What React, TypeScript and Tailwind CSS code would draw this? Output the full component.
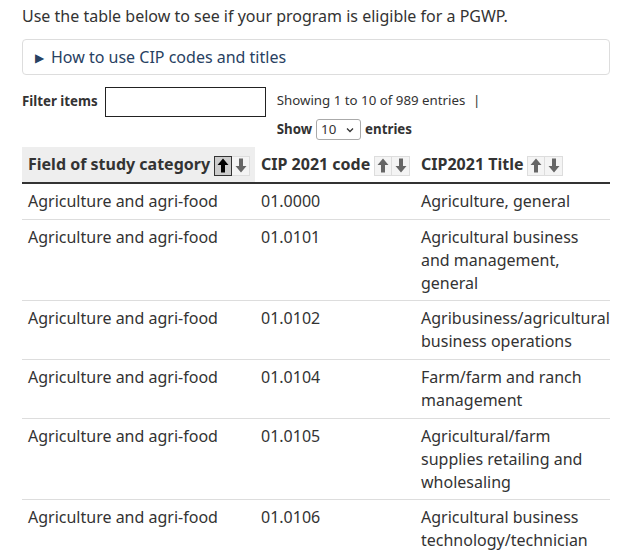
import React from "react";

const rows: [string, string, string][] = [
  ["Agriculture and agri-food", "01.0000", "Agriculture, general"],
  ["Agriculture and agri-food", "01.0101", "Agricultural business and management, general"],
  ["Agriculture and agri-food", "01.0102", "Agribusiness/agricultural business operations"],
  ["Agriculture and agri-food", "01.0104", "Farm/farm and ranch management"],
  ["Agriculture and agri-food", "01.0105", "Agricultural/farm supplies retailing and wholesaling"],
  ["Agriculture and agri-food", "01.0106", "Agricultural business technology/technician"],
];

function Arrow({ dir, color }: { dir: "up" | "down"; color: string }) {
  return (
    <svg width="12" height="15" viewBox="0 0 12 15" style={{ transform: dir === "down" ? "rotate(180deg)" : undefined }}>
      <path d="M6 0.5 L11.5 7 L8 7 L8 14.5 L4 14.5 L4 7 L0.5 7 Z" fill={color} />
    </svg>
  );
}

function SortButtons({ active }: { active?: boolean }) {
  return (
    <span className="inline-flex ml-[4px] align-middle">
      <span
        className={
          "w-[18px] h-[20px] flex items-center justify-center border " +
          (active ? "border-[#333] bg-[#ccc]" : "border-[#ddd] bg-[#f4f4f4]")
        }
      >
        <Arrow dir="up" color={active ? "#000" : "#666"} />
      </span>
      <span className="w-[18px] h-[20px] flex items-center justify-center border border-[#ddd] border-l-0 bg-[#f4f4f4]">
        <Arrow dir="down" color="#666" />
      </span>
    </span>
  );
}

export default function App() {
  return (
    <div
      className="bg-white text-[#333] pl-[22px] pr-[30px] pt-[5px] w-[640px] h-[558px] overflow-hidden"
      style={{ fontFamily: '"Noto Sans", sans-serif' }}
    >
      <p className="text-[16px] leading-[23px]">
        Use the table below to see if your program is eligible for a PGWP.
      </p>
      <div className="mt-[11px] h-[36px] border border-[#ddd] rounded-[4px] flex items-center pl-[12px] text-[#284162] text-[16px]">
        <span className="text-[12px] mr-[7px] mt-[1px]">▶</span>
        <span>How to use CIP codes and titles</span>
      </div>
      <div className="flex mt-[12px]">
        <div className="flex items-center h-[30px]">
          <span className="font-bold text-[13.3px] mr-[7px]">Filter items</span>
          <span className="w-[161px] h-[30px] border-[1.5px] border-[#222] bg-white" />
        </div>
        <div className="ml-[11px] text-[13.3px] flex flex-col">
          <div className="mt-[3px] leading-[20px]">
            Showing 1 to 10 of 989 entries <span className="ml-[4px]">|</span>
          </div>
          <div className="flex items-center mt-[9px] font-bold">
            <span>Show</span>
            <span className="mx-[4px] w-[45px] h-[21px] border border-[#aaa] rounded-[3px] flex items-center justify-between pl-[4px] pr-[6px] font-normal bg-white">
              <span className="text-[13.3px]">10</span>
              <svg width="8" height="6" viewBox="0 0 8 6">
                <path d="M1 1.5 L4 4.5 L7 1.5" stroke="#333" strokeWidth="1.3" fill="none" />
              </svg>
            </span>
            <span>entries</span>
          </div>
        </div>
      </div>
      <table className="mt-[7px] w-[588px] table-fixed border-collapse text-[16px] leading-[22.86px]">
        <colgroup>
          <col className="w-[233px]" />
          <col className="w-[160px]" />
          <col className="w-[195px]" />
        </colgroup>
        <thead>
          <tr className="border-b-2 border-[#333]">
            <th className="text-left font-bold bg-[#eee] px-[6px] h-[36px] whitespace-nowrap">
              Field of study category
              <SortButtons active />
            </th>
            <th className="text-left font-bold px-[6px] whitespace-nowrap">
              CIP 2021 code
              <SortButtons />
            </th>
            <th className="text-left font-bold px-[6px] whitespace-nowrap">
              CIP2021 Title
              <SortButtons />
            </th>
          </tr>
        </thead>
        <tbody>
          {rows.map((r, i) => (
            <tr key={i} className="border-b border-[#ddd] align-top">
              <td className="px-[6px] py-[6px]">{r[0]}</td>
              <td className="px-[6px] py-[6px]">{r[1]}</td>
              <td className="px-[6px] py-[6px]">{r[2]}</td>
            </tr>
          ))}
        </tbody>
      </table>
    </div>
  );
}
